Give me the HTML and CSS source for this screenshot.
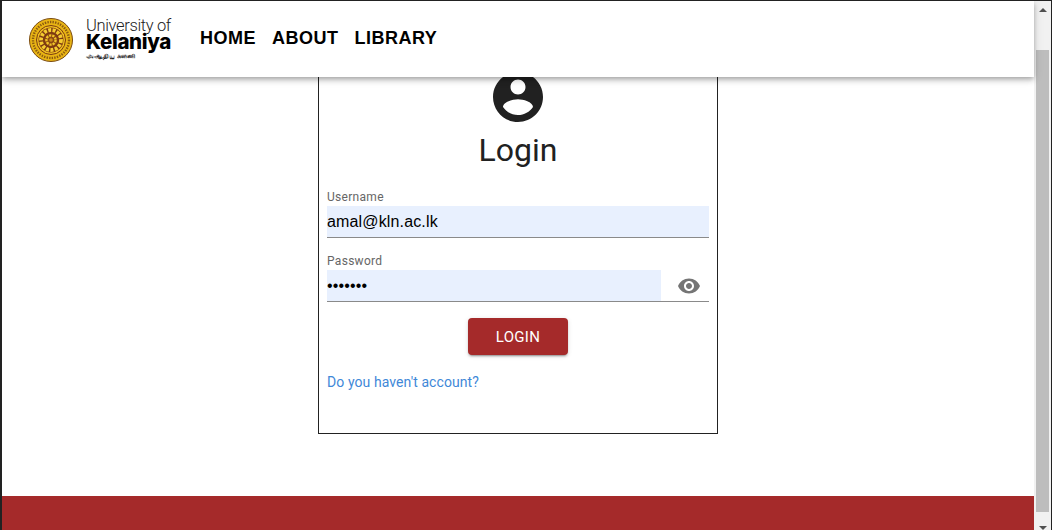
FILE: index.html
```html
<!DOCTYPE html>
<html lang="en">
<head>
    <meta charset="UTF-8">
    <title>Login</title>
    <link rel="stylesheet" href="styles.css">
</head>
<body>
<div class="window">
    <div class="page">
        <header class="appbar">
            <a class="brand" href="#">
                <svg class="seal" viewBox="0 0 44 44">
                    <circle cx="22" cy="22" r="21.5" fill="#e8b414" stroke="#7a4a10" stroke-width="1"/>
                    <circle cx="22" cy="22" r="18" fill="none" stroke="#8a5a10" stroke-width="2.4" stroke-dasharray="1.4 1.2"/>
                    <circle cx="22" cy="22" r="14.5" fill="#f0c020" stroke="#7a3a10" stroke-width="1"/>
                    <circle cx="22" cy="22" r="12.5" fill="#7d3a12"/>
                    <circle cx="22" cy="22" r="10" fill="none" stroke="#f4cc30" stroke-width="3.8" stroke-dasharray="3 1.4"/>
                    <circle cx="22" cy="22" r="6.5" fill="#8a4812"/>
                    <circle cx="22" cy="22" r="4.6" fill="none" stroke="#f0c428" stroke-width="2.4" stroke-dasharray="2.2 1"/>
                    <circle cx="22" cy="22" r="1.8" fill="#c98a1c"/>
                </svg>
                <span class="brand-text">
                    <span class="brand-top">University of</span>
                    <span class="brand-name">Kelaniya</span>
                    <span class="brand-sub">அஆதிய களனி</span>
                </span>
            </a>
            <nav class="nav">
                <a href="#">HOME</a>
                <a href="#">ABOUT</a>
                <a href="#">LIBRARY</a>
            </nav>
        </header>

        <main class="content">
            <form class="card">
                <svg class="avatar" viewBox="0 0 24 24">
                    <path d="M12 2C6.48 2 2 6.48 2 12s4.48 10 10 10 10-4.48 10-10S17.52 2 12 2zm0 3c1.66 0 3 1.34 3 3s-1.34 3-3 3-3-1.34-3-3 1.34-3 3-3zm0 14.2c-2.5 0-4.71-1.28-6-3.22.03-1.99 4-3.08 6-3.08 1.99 0 5.97 1.09 6 3.08-1.29 1.94-3.5 3.22-6 3.22z"/>
                </svg>
                <h1 class="title">Login</h1>

                <label class="field">
                    <span class="field-label">Username</span>
                    <span class="field-row">
                        <input class="field-input" type="text" value="amal@kln.ac.lk">
                    </span>
                </label>

                <label class="field">
                    <span class="field-label">Password</span>
                    <span class="field-row">
                        <input class="field-input" type="password" value="1234567">
                        <svg class="eye" viewBox="0 0 24 24">
                            <path d="M12 4.5C7 4.5 2.73 7.61 1 12c1.73 4.39 6 7.5 11 7.5s9.27-3.11 11-7.5c-1.73-4.39-6-7.5-11-7.5zM12 17c-2.76 0-5-2.24-5-5s2.24-5 5-5 5 2.24 5 5-2.24 5-5 5zm0-8c-1.66 0-3 1.34-3 3s1.34 3 3 3 3-1.34 3-3-1.34-3-3-3z"/>
                        </svg>
                    </span>
                </label>

                <button class="submit" type="button">LOGIN</button>
                <a class="signup" href="#">Do you haven't account?</a>
            </form>
        </main>

        <footer class="footer"></footer>
    </div>

    <div class="scrollbar">
        <span class="arrow-up"></span>
        <span class="thumb"></span>
        <span class="arrow-down"></span>
    </div>
</div>
</body>
</html>
```

FILE: styles.css
```css
* {
    box-sizing: border-box;
    margin: 0;
    padding: 0;
}

html, body {
    height: 100%;
    overflow: hidden;
}

body {
    font-family: Roboto, "Liberation Sans", sans-serif;
    background: #fff;
}

a {
    text-decoration: none;
}

.window {
    display: flex;
    height: 530px;
    border-top: 1px solid #222;
    border-left: 2px solid #222;
    border-right: 1px solid #222;
    overflow: hidden;
}

.page {
    flex: 1;
    display: flex;
    flex-direction: column;
    min-width: 0;
}

/* header */
.appbar {
    position: relative;
    z-index: 2;
    flex: none;
    display: flex;
    align-items: center;
    height: 76px;
    padding-left: 27px;
    background: #fff;
    box-shadow: 0 2px 4px -1px rgba(0,0,0,.2), 0 4px 5px 0 rgba(0,0,0,.14), 0 1px 10px 0 rgba(0,0,0,.12);
}

.brand {
    display: flex;
    align-items: flex-start;
    color: #111;
    width: 171px;
}

.seal {
    width: 44px;
    height: 44px;
    flex: none;
    margin-top: 2px;
}

.brand-text {
    display: flex;
    flex-direction: column;
    margin-left: 13px;
    padding-top: 2px;
}

.brand-top {
    font-family: Roboto, sans-serif;
    font-weight: 300;
    font-size: 16.5px;
    line-height: 15px;
    letter-spacing: -0.35px;
    white-space: nowrap;
    color: #222;
}

.brand-name {
    font-family: Inter, "Liberation Sans", sans-serif;
    font-weight: 800;
    font-size: 20.5px;
    line-height: 18px;
    letter-spacing: -0.35px;
    color: #000;
}

.brand-sub {
    font-family: "Noto Sans", "Noto Sans CJK SC", sans-serif;
    font-weight: 700;
    font-size: 6.5px;
    line-height: 8px;
    margin-top: 1px;
    color: #222;
}

.nav {
    display: flex;
    gap: 16px;
    margin-bottom: 2px;
}

.nav a {
    font-family: "Liberation Sans", sans-serif;
    font-size: 18px;
    font-weight: 700;
    letter-spacing: .5px;
    color: #000;
}

/* login */
.content {
    flex: 1;
    display: flex;
    flex-direction: column;
    align-items: center;
    justify-content: flex-end;
    padding-bottom: 62px;
    min-height: 0;
    overflow: hidden;
}

.card {
    flex: none;
    display: flex;
    flex-direction: column;
    width: 400px;
    padding: 0 8px 43px;
    border: 1px solid #222;
}

.avatar {
    align-self: center;
    width: 60px;
    height: 60px;
    fill: #212121;
}

.title {
    margin-top: 2px;
    text-align: center;
    font-size: 32px;
    font-weight: 400;
    line-height: 42px;
    color: #212121;
}

.field {
    display: block;
    margin-top: 19px;
}

.field + .field {
    margin-top: 16px;
}

.field-label {
    display: block;
    font-size: 12px;
    line-height: 14px;
    letter-spacing: .3px;
    color: #666;
}

.field-row {
    display: flex;
    align-items: center;
    margin-top: 2px;
    height: 32px;
    border-bottom: 1px solid #8a8a8a;
}

.field-input {
    flex: 1;
    min-width: 0;
    height: 31px;
    border: 0;
    outline: 0;
    background: #e8f0fe;
    font-family: "Liberation Sans", sans-serif;
    font-size: 16px;
    letter-spacing: .15px;
    color: #000;
}

.eye {
    flex: none;
    width: 24px;
    height: 24px;
    margin: 0 8px 0 16px;
    fill: #757575;
}

.submit {
    align-self: center;
    width: 100px;
    height: 37px;
    margin-top: 16px;
    border: 0;
    border-radius: 4px;
    background: #a52a2a;
    color: #fff;
    font-family: Roboto, "Liberation Sans", sans-serif;
    font-size: 15px;
    font-weight: 400;
    letter-spacing: .3px;
    box-shadow: 0 3px 1px -2px rgba(0,0,0,.2), 0 2px 2px 0 rgba(0,0,0,.14), 0 1px 5px 0 rgba(0,0,0,.12);
}

.signup {
    margin-top: 19px;
    font-size: 14px;
    line-height: 16px;
    letter-spacing: .08px;
    color: #3f88d8;
}

.footer {
    flex: none;
    height: 34px;
    background: #a52a2a;
}

/* browser scrollbar as it appears in the shot */
.scrollbar {
    flex: none;
    display: flex;
    flex-direction: column;
    align-items: center;
    width: 17px;
    background: #f1f1f1;
}

.arrow-up {
    flex: none;
    width: 0;
    height: 0;
    margin-top: 7px;
    border-left: 4px solid transparent;
    border-right: 4px solid transparent;
    border-bottom: 4px solid #505050;
}

.thumb {
    flex: none;
    width: 13px;
    height: 462px;
    margin-top: 38px;
    background: #bdbdbd;
}

.arrow-down {
    flex: none;
    width: 0;
    height: 0;
    margin-top: 14px;
    border-left: 4px solid transparent;
    border-right: 4px solid transparent;
    border-top: 4px solid #505050;
}
```
